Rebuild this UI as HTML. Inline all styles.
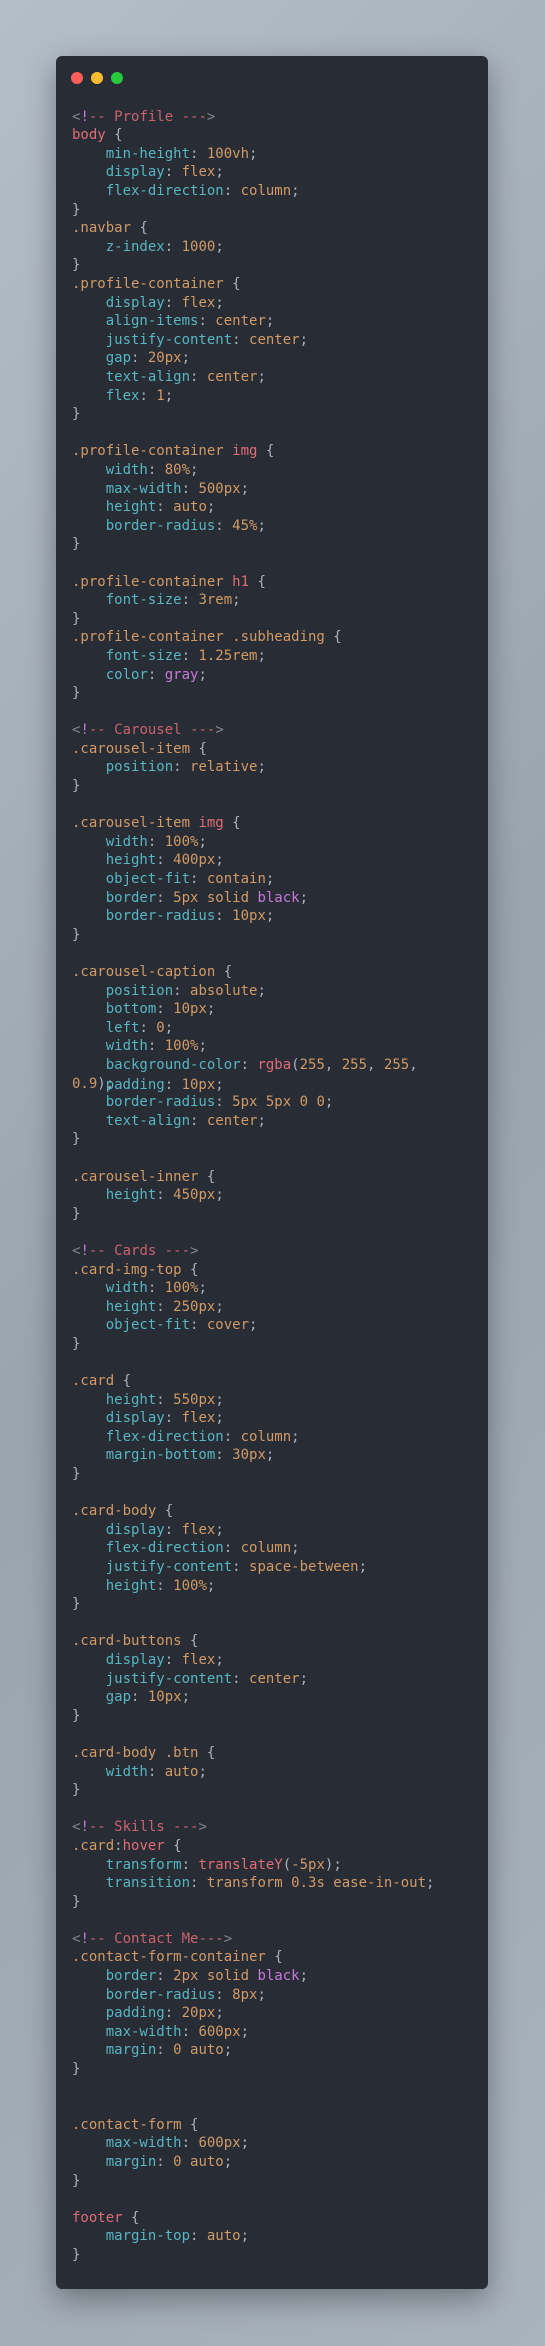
<!DOCTYPE html>
<html><head><meta charset="utf-8"><style>
html,body{margin:0;padding:0}
body{width:545px;height:2346px;background:linear-gradient(135deg,#b4bec8 0%,#9aa4ae 50%,#a9b3bd 100%);position:relative;overflow:hidden}
.card{position:absolute;left:56px;top:56px;width:432px;height:2233px;background:#282c34;border-radius:6px;box-shadow:0 10px 30px rgba(0,0,0,.35)}
.dot{position:absolute;top:72px;width:12px;height:12px;border-radius:50%}
pre{position:absolute;left:72px;top:107.7px;margin:0;font-family:"DejaVu Sans Mono","Liberation Mono",monospace;font-size:14px;line-height:18.6px;color:#abb2bf;white-space:pre}
.c{color:#7f8894}.x{color:#c678dd}.cm{color:#c8636e}
.s{color:#d19a66}.t{color:#e06c75}.p{color:#56b6c2}.v{color:#d19a66}.k{color:#c678dd}
.ov{position:relative}
.ov span.abs{position:absolute;left:33.7px;top:0}
</style></head><body>
<div class="card"></div>
<div class="dot" style="left:71px;background:#ff5f56"></div>
<div class="dot" style="left:91px;background:#ffbd2e"></div>
<div class="dot" style="left:111px;background:#27c93f"></div>
<pre><span class="c">&lt;</span><span class="x">!</span><span class="cm">-- Profile ---</span><span class="c">&gt;</span>
<span class="t">body</span> {
    <span class="p">min-height</span>: <span class="v">100vh</span>;
    <span class="p">display</span>: <span class="v">flex</span>;
    <span class="p">flex-direction</span>: <span class="v">column</span>;
}
<span class="s">.navbar</span> {
    <span class="p">z-index</span>: <span class="v">1000</span>;
}
<span class="s">.profile-container</span> {
    <span class="p">display</span>: <span class="v">flex</span>;
    <span class="p">align-items</span>: <span class="v">center</span>;
    <span class="p">justify-content</span>: <span class="v">center</span>;
    <span class="p">gap</span>: <span class="v">20px</span>;
    <span class="p">text-align</span>: <span class="v">center</span>;
    <span class="p">flex</span>: <span class="v">1</span>;
}

<span class="s">.profile-container</span> <span class="t">img</span> {
    <span class="p">width</span>: <span class="v">80%</span>;
    <span class="p">max-width</span>: <span class="v">500px</span>;
    <span class="p">height</span>: <span class="v">auto</span>;
    <span class="p">border-radius</span>: <span class="v">45%</span>;
}

<span class="s">.profile-container</span> <span class="t">h1</span> {
    <span class="p">font-size</span>: <span class="v">3rem</span>;
}
<span class="s">.profile-container .subheading</span> {
    <span class="p">font-size</span>: <span class="v">1.25rem</span>;
    <span class="p">color</span>: <span class="k">gray</span>;
}

<span class="c">&lt;</span><span class="x">!</span><span class="cm">-- Carousel ---</span><span class="c">&gt;</span>
<span class="s">.carousel-item</span> {
    <span class="p">position</span>: <span class="v">relative</span>;
}

<span class="s">.carousel-item</span> <span class="t">img</span> {
    <span class="p">width</span>: <span class="v">100%</span>;
    <span class="p">height</span>: <span class="v">400px</span>;
    <span class="p">object-fit</span>: <span class="v">contain</span>;
    <span class="p">border</span>: <span class="v">5px solid</span> <span class="k">black</span>;
    <span class="p">border-radius</span>: <span class="v">10px</span>;
}

<span class="s">.carousel-caption</span> {
    <span class="p">position</span>: <span class="v">absolute</span>;
    <span class="p">bottom</span>: <span class="v">10px</span>;
    <span class="p">left</span>: <span class="v">0</span>;
    <span class="p">width</span>: <span class="v">100%</span>;
    <span class="p">background-color</span>: <span class="t">rgba</span>(<span class="v">255</span>, <span class="v">255</span>, <span class="v">255</span>,
<span class="ov"><span class="v">0.9</span>);<span class="abs"><span class="p">padding</span>: <span class="v">10px</span>;</span></span>
    <span class="p">border-radius</span>: <span class="v">5px 5px 0 0</span>;
    <span class="p">text-align</span>: <span class="v">center</span>;
}

<span class="s">.carousel-inner</span> {
    <span class="p">height</span>: <span class="v">450px</span>;
}

<span class="c">&lt;</span><span class="x">!</span><span class="cm">-- Cards ---</span><span class="c">&gt;</span>
<span class="s">.card-img-top</span> {
    <span class="p">width</span>: <span class="v">100%</span>;
    <span class="p">height</span>: <span class="v">250px</span>;
    <span class="p">object-fit</span>: <span class="v">cover</span>;
}

<span class="s">.card</span> {
    <span class="p">height</span>: <span class="v">550px</span>;
    <span class="p">display</span>: <span class="v">flex</span>;
    <span class="p">flex-direction</span>: <span class="v">column</span>;
    <span class="p">margin-bottom</span>: <span class="v">30px</span>;
}

<span class="s">.card-body</span> {
    <span class="p">display</span>: <span class="v">flex</span>;
    <span class="p">flex-direction</span>: <span class="v">column</span>;
    <span class="p">justify-content</span>: <span class="v">space-between</span>;
    <span class="p">height</span>: <span class="v">100%</span>;
}

<span class="s">.card-buttons</span> {
    <span class="p">display</span>: <span class="v">flex</span>;
    <span class="p">justify-content</span>: <span class="v">center</span>;
    <span class="p">gap</span>: <span class="v">10px</span>;
}

<span class="s">.card-body .btn</span> {
    <span class="p">width</span>: <span class="v">auto</span>;
}

<span class="c">&lt;</span><span class="x">!</span><span class="cm">-- Skills ---</span><span class="c">&gt;</span>
<span class="s">.card</span>:<span class="t">hover</span> {
    <span class="p">transform</span>: <span class="t">translateY</span>(<span class="v">-5px</span>);
    <span class="p">transition</span>: <span class="v">transform 0.3s ease-in-out</span>;
}

<span class="c">&lt;</span><span class="x">!</span><span class="cm">-- Contact Me---</span><span class="c">&gt;</span>
<span class="s">.contact-form-container</span> {
    <span class="p">border</span>: <span class="v">2px solid</span> <span class="k">black</span>;
    <span class="p">border-radius</span>: <span class="v">8px</span>;
    <span class="p">padding</span>: <span class="v">20px</span>;
    <span class="p">max-width</span>: <span class="v">600px</span>;
    <span class="p">margin</span>: <span class="v">0 auto</span>;
}


<span class="s">.contact-form</span> {
    <span class="p">max-width</span>: <span class="v">600px</span>;
    <span class="p">margin</span>: <span class="v">0 auto</span>;
}

<span class="t">footer</span> {
    <span class="p">margin-top</span>: <span class="v">auto</span>;
}</pre>
</body></html>
